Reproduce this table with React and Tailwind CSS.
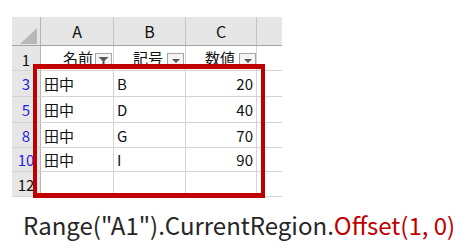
const cols = [
  { key: 'A', w: 'w-[73px]' },
  { key: 'B', w: 'w-[72px]' },
  { key: 'C', w: 'w-[71px]' },
];

const rows = [
  { no: '3', h: 'h-[26px]', a: '田中', b: 'B', c: '20', hidden: true },
  { no: '5', h: 'h-[26px]', a: '田中', b: 'D', c: '40', hidden: true },
  { no: '8', h: 'h-[25px]', a: '田中', b: 'G', c: '70', hidden: true },
  { no: '10', h: 'h-[24px]', a: '田中', b: 'I', c: '90', hidden: true },
  { no: '12', h: 'h-[25px]', a: '', b: '', c: '', hidden: false },
];

function FilterButton({ active }) {
  return (
    <div className="w-[17px] h-[16px] border border-[#a6a6a6] bg-[#f4f4f4] flex items-center justify-center shrink-0">
      {active ? (
        <svg width="11" height="10" viewBox="0 0 11 10">
          <path d="M0.5 1 H10.5 L6.5 5 V9.5 H4.5 V5 Z" fill="#595959" />
        </svg>
      ) : (
        <svg width="8" height="4" viewBox="0 0 8 4">
          <path d="M0 0 H8 L4 4 Z" fill="#595959" />
        </svg>
      )}
    </div>
  );
}

export default function App() {
  return (
    <div className="relative w-[465px] h-[250px] bg-white overflow-hidden" style={{ fontFamily: '"Noto Sans CJK JP", "Noto Sans", sans-serif' }}>
      {/* Sheet */}
      <div className="absolute left-[12px] top-[17px] w-[270px] text-[15px] leading-none text-[#111]">
        {/* column header row */}
        <div className="flex h-[29px] bg-[#e6e6e6] border-b border-[#a3a3a3]">
          <div className="w-[29px] border-r border-[#b5b5b5] relative">
            <svg className="absolute left-[8px] top-[11px]" width="17" height="16" viewBox="0 0 17 16">
              <path d="M17 0 V16 H0 Z" fill="#b8b8b8" />
            </svg>
          </div>
          {cols.map((c) => (
            <div key={c.key} className={`${c.w} border-r border-[#c4c4c4] flex items-center justify-center text-[16px]`}>
              {c.key}
            </div>
          ))}
          <div className="flex-1" />
        </div>

        {/* row 1 */}
        <div className="flex h-[25px] border-b border-[#d4d4d4]">
          <div className="w-[29px] bg-[#e6e6e6] border-r border-[#b5b5b5] flex items-center justify-center pt-[2px]">1</div>
          <div className="w-[73px] border-r border-[#d4d4d4] flex items-end justify-end gap-[2px] pr-[1px] pb-[1px]">
            <span className="mb-[4px]">名前</span>
            <FilterButton active />
          </div>
          <div className="w-[72px] border-r border-[#d4d4d4] flex items-end justify-end gap-[4px] pr-[1px] pb-[1px]">
            <span className="mb-[4px]">記号</span>
            <FilterButton />
          </div>
          <div className="w-[71px] border-r border-[#d4d4d4] flex items-end justify-end gap-[4px] pr-0 pb-[1px]">
            <span className="mb-[4px]">数値</span>
            <FilterButton />
          </div>
          <div className="flex-1" />
        </div>

        {rows.map((r) => (
          <div key={r.no} className={`flex ${r.h} border-b border-[#d4d4d4]`}>
            <div className={`w-[29px] bg-[#e6e6e6] border-r border-[#b5b5b5] flex items-center justify-center ${r.hidden ? 'text-[#1f1fe0]' : ''}`}>
              {r.no}
            </div>
            <div className="w-[73px] border-r border-[#d4d4d4] flex items-center pl-[3px]">{r.a}</div>
            <div className="w-[72px] border-r border-[#d4d4d4] flex items-center pl-[3px]">{r.b}</div>
            <div className="w-[71px] border-r border-[#d4d4d4] flex items-center justify-end pr-[3px]">{r.c}</div>
            <div className="flex-1" />
          </div>
        ))}
      </div>

      {/* CurrentRegion highlight */}
      <div className="absolute left-[33px] top-[64px] w-[232px] h-[134px] border-x-4 border-y-[5px] border-[#c00000]" />

      {/* caption */}
      <div className="absolute left-[23px] top-[207px] text-[24px] leading-[36px] text-[#262626] whitespace-nowrap">
        Range("A1").CurrentRegion.<span className="text-[#c00000]">Offset(1, 0)</span>
      </div>
    </div>
  );
}
